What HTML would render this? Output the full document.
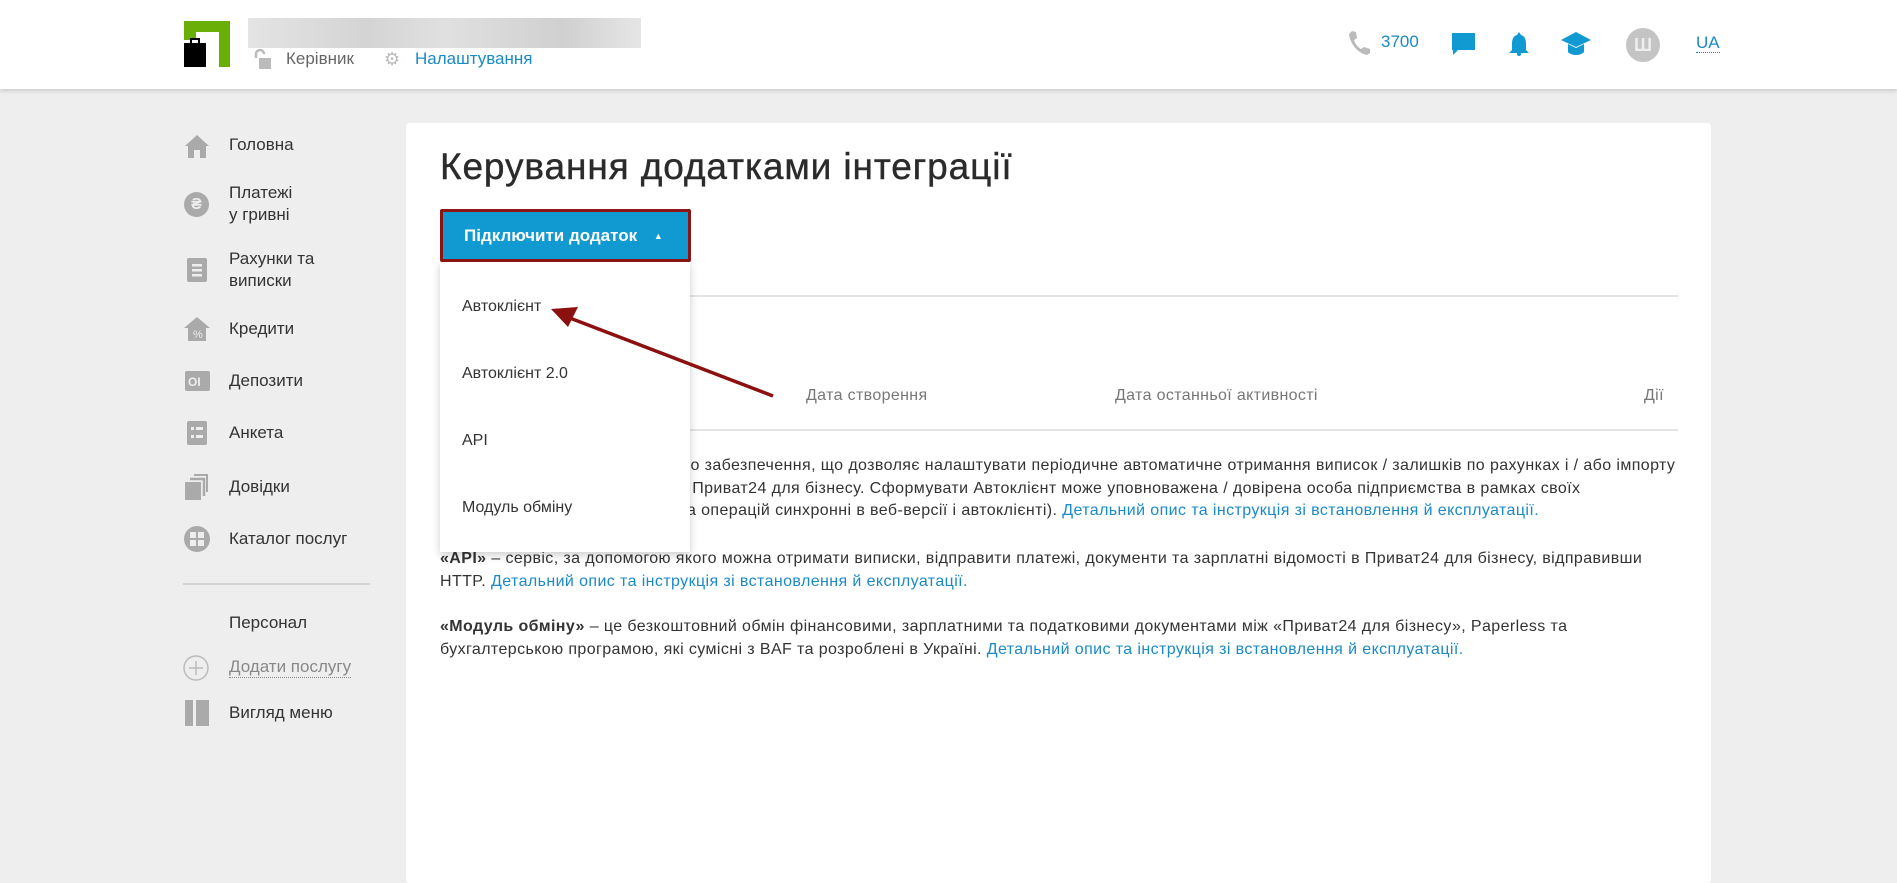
<!DOCTYPE html>
<html><head><meta charset="utf-8"><style>
*{margin:0;padding:0;box-sizing:border-box}
body{width:1897px;height:876px;overflow:hidden;background:#eeeeee;font-family:"Liberation Sans",sans-serif;color:#333;position:relative}
.abs{position:absolute;white-space:nowrap}
#hdr{position:absolute;left:0;top:0;width:1897px;height:89px;background:#fff;box-shadow:0 2px 4px rgba(0,0,0,.15)}
.blue{color:#1a8ac6}
.side{font-size:17px;color:#333;line-height:22px}
#card{position:absolute;left:406px;top:123px;width:1305px;height:760px;background:#fff;border-radius:3px}
.p{font-size:16px;line-height:22.5px;color:#333;letter-spacing:0.4px}
.p a{color:#1a8ac6;text-decoration:none}
.th{font-size:16px;color:#777;letter-spacing:0.35px}
</style></head><body>
<div id="hdr">
 <svg class="abs" style="left:184px;top:21px" width="46" height="46" viewBox="0 0 46 46"><path d="M0 0H46V46H35V11H12V19H0Z" fill="#6aaf08"/><rect x="0" y="22" width="22" height="24" fill="#000"/><rect x="7" y="18" width="8" height="5" fill="none" stroke="#000" stroke-width="2"/></svg>
 <div class="abs" style="left:248px;top:18px;width:393px;height:30px;background:linear-gradient(90deg,#e4e4e4,#d4d4d4 30%,#e0e0e0 50%,#d0d0d0 80%,#e6e6e6)"></div>
 <svg class="abs" style="left:253px;top:48px" width="20" height="22" viewBox="0 0 20 22"><path d="M3 10V6a4 4 0 0 1 8 0" fill="none" stroke="#bbb" stroke-width="2.5"/><rect x="6" y="10" width="12" height="11" fill="#bbb"/></svg>
 <div class="abs" style="left:286px;top:49px;font-size:17px;color:#666">Керівник</div>
 <div class="abs" style="left:384px;top:49px;font-size:18px;color:#bbb">⚙</div>
 <div class="abs blue" style="left:415px;top:49px;font-size:17px">Налаштування</div>
 <svg class="abs" style="left:1347px;top:29px" width="24" height="26" viewBox="0 0 24 26"><path d="M5 2l4 1 1 6-3 2c1 4 4 7 7 9l3-2 6 2v4l-3 2C10 24 3 14 2 5z" fill="#bbb"/></svg>
 <div class="abs blue" style="left:1381px;top:32px;font-size:17px">3700</div>
 <svg class="abs" style="left:1452px;top:33px" width="24" height="24" viewBox="0 0 24 24"><path d="M0 0H23V17H6L1 22V17H0Z" fill="#1199d2"/></svg>
 <svg class="abs" style="left:1508px;top:32px" width="22" height="24" viewBox="0 0 22 24"><path d="M11 0l2 3c4 1 5 5 5 9v6l3 3H1l3-3v-6c0-4 1-8 5-9z" fill="#1199d2"/><circle cx="11" cy="22" r="2" fill="#1199d2"/></svg>
 <svg class="abs" style="left:1561px;top:32px" width="30" height="24" viewBox="0 0 30 24"><path d="M15 0L30 8 15 15 0 8Z" fill="#1199d2"/><path d="M7 12v8c4 4 12 4 16 0v-8l-8 4z" fill="#1199d2"/></svg>
 <div class="abs" style="left:1626px;top:28px;width:34px;height:34px;border-radius:50%;background:#c4c4c4;color:#eee;font-size:18px;font-weight:bold;text-align:center;line-height:34px">Ш</div>
 <div class="abs blue" style="left:1696px;top:33px;font-size:17px;border-bottom:1px dotted #1a8ac6;line-height:19px">UA</div>
</div>

<div class="side">
 <svg class="abs" style="left:185px;top:134px" width="24" height="24" viewBox="0 0 24 24"><path d="M12 1L24 12H21V24H15V16H9V24H3V12H0Z" fill="#aaa"/></svg>
 <div class="abs" style="left:229px;top:134px">Головна</div>
 <div class="abs" style="left:184px;top:192px;width:25px;height:25px;border-radius:50%;background:#aaa;color:#eee;font-weight:bold;text-align:center;line-height:25px;font-size:16px">₴</div>
 <div class="abs" style="left:229px;top:182px">Платежі<br>у гривні</div>
 <svg class="abs" style="left:187px;top:258px" width="20" height="24" viewBox="0 0 20 24"><rect width="20" height="24" rx="2" fill="#aaa"/><rect x="5" y="6" width="10" height="2.5" fill="#eee"/><rect x="5" y="11" width="10" height="2.5" fill="#eee"/><rect x="5" y="16" width="10" height="2.5" fill="#eee"/></svg>
 <div class="abs" style="left:229px;top:248px">Рахунки та<br>виписки</div>
 <svg class="abs" style="left:184px;top:317px" width="26" height="24" viewBox="0 0 26 24"><path d="M13 0L26 11H22V24H4V11H0Z" fill="#aaa"/><text x="9" y="21" font-size="11" fill="#eee" font-family="Liberation Sans">%</text></svg>
 <div class="abs" style="left:229px;top:318px">Кредити</div>
 <svg class="abs" style="left:185px;top:371px" width="25" height="22" viewBox="0 0 25 22"><rect width="25" height="20" rx="2" fill="#aaa"/><text x="3" y="15" font-size="12" font-weight="bold" fill="#eee" font-family="Liberation Sans">OI</text></svg>
 <div class="abs" style="left:229px;top:370px">Депозити</div>
 <svg class="abs" style="left:187px;top:421px" width="20" height="24" viewBox="0 0 20 24"><rect width="20" height="24" rx="2" fill="#aaa"/><rect x="4" y="6" width="3" height="3" fill="#eee"/><rect x="9" y="6" width="7" height="3" fill="#eee"/><rect x="4" y="14" width="3" height="3" fill="#eee"/><rect x="9" y="14" width="7" height="3" fill="#eee"/></svg>
 <div class="abs" style="left:229px;top:422px">Анкета</div>
 <svg class="abs" style="left:185px;top:474px" width="24" height="26" viewBox="0 0 24 26"><rect x="0" y="8" width="16" height="18" fill="#aaa"/><path d="M5 5h14v17" fill="none" stroke="#aaa" stroke-width="2.5"/><path d="M9 1h13v17" fill="none" stroke="#aaa" stroke-width="2"/></svg>
 <div class="abs" style="left:229px;top:476px">Довідки</div>
 <svg class="abs" style="left:184px;top:526px" width="26" height="26" viewBox="0 0 26 26"><circle cx="13" cy="13" r="13" fill="#aaa"/><rect x="6" y="6" width="6" height="6" fill="#eee"/><rect x="14" y="6" width="6" height="6" fill="#eee"/><rect x="6" y="14" width="6" height="6" fill="#eee"/><rect x="14" y="14" width="6" height="6" fill="#eee"/></svg>
 <div class="abs" style="left:229px;top:528px">Каталог послуг</div>
 <div class="abs" style="left:183px;top:583px;width:187px;height:2px;background:#d4d4d4"></div>
 <div class="abs" style="left:229px;top:612px">Персонал</div>
 <svg class="abs" style="left:183px;top:655px" width="26" height="26" viewBox="0 0 26 26"><circle cx="13" cy="13" r="12" fill="none" stroke="#bbb" stroke-width="1.5"/><path d="M13 6v14M6 13h14" stroke="#bbb" stroke-width="1.5"/></svg>
 <div class="abs" style="left:229px;top:656px;color:#888;border-bottom:1px dotted #888;line-height:21px">Додати послугу</div>
 <svg class="abs" style="left:185px;top:700px" width="24" height="26" viewBox="0 0 24 26"><rect width="8" height="26" fill="#aaa"/><rect x="11" width="13" height="26" fill="#aaa"/></svg>
 <div class="abs" style="left:229px;top:702px">Вигляд меню</div>
</div>

<div id="card"></div>
<div class="abs" style="left:440px;top:146px;font-size:37px;color:#2b2b2b;letter-spacing:0.9px;-webkit-text-stroke:0.4px #2b2b2b">Керування додатками інтеграції</div>
<div class="abs" style="left:440px;top:295px;width:1238px;height:2px;background:#e4e4e4"></div>
<div class="abs th" style="left:806px;top:387px">Дата створення</div>
<div class="abs th" style="left:1115px;top:387px">Дата останньої активності</div>
<div class="abs th" style="left:1644px;top:387px">Дії</div>
<div class="abs" style="left:440px;top:429px;width:1238px;height:2px;background:#e4e4e4"></div>

<div class="abs p" style="left:440px;top:455px"><b>«Автоклієнт»</b> – вид програмного забезпечення, що дозволяє налаштувати періодичне автоматичне отримання виписок / залишків по рахунках і / або імпорту<br>платежів на підписання / опис в Приват24 для бізнесу. Сформувати Автоклієнт може уповноважена / довірена особа підприємства в рамках своїх<br>повноважень (список рахунків та операцій синхронні в веб-версії і автоклієнті). <a>Детальний опис та інструкція зі встановлення й експлуатації.</a></div>
<div class="abs p" style="left:440px;top:548px"><b>«API»</b> – сервіс, за допомогою якого можна отримати виписки, відправити платежі, документи та зарплатні відомості в Приват24 для бізнесу, відправивши<br>HTTP. <a>Детальний опис та інструкція зі встановлення й експлуатації.</a></div>
<div class="abs p" style="left:440px;top:616px"><b>«Модуль обміну»</b> – це безкоштовний обмін фінансовими, зарплатними та податковими документами між «Приват24 для бізнесу», Paperless та<br>бухгалтерською програмою, які сумісні з BAF та розроблені в Україні. <a>Детальний опис та інструкція зі встановлення й експлуатації.</a></div>

<div class="abs" style="left:440px;top:262px;width:250px;height:290px;background:#fff;box-shadow:0 3px 8px rgba(0,0,0,.2)">
 <div class="abs" style="left:22px;top:36px;font-size:16px;color:#333">Автоклієнт</div>
 <div class="abs" style="left:22px;top:103px;font-size:16px;color:#333">Автоклієнт 2.0</div>
 <div class="abs" style="left:22px;top:170px;font-size:16px;color:#333">API</div>
 <div class="abs" style="left:22px;top:237px;font-size:16px;color:#333">Модуль обміну</div>
</div>
<div class="abs" style="left:440px;top:209px;width:251px;height:53px;background:#1199d2;border:3px solid #8b1414;border-radius:2px;color:#fff;font-weight:bold;font-size:17px;line-height:47px;padding-left:21px">Підключити додаток <span style="font-size:9px;margin-left:12px;vertical-align:2px">▲</span></div>

<svg class="abs" style="left:0;top:0" width="1897" height="876"><line x1="773" y1="396" x2="562" y2="315" stroke="#8b1010" stroke-width="3.5"/><path d="M551 309L578 307L568 327Z" fill="#8b1010"/></svg>
</body></html>
